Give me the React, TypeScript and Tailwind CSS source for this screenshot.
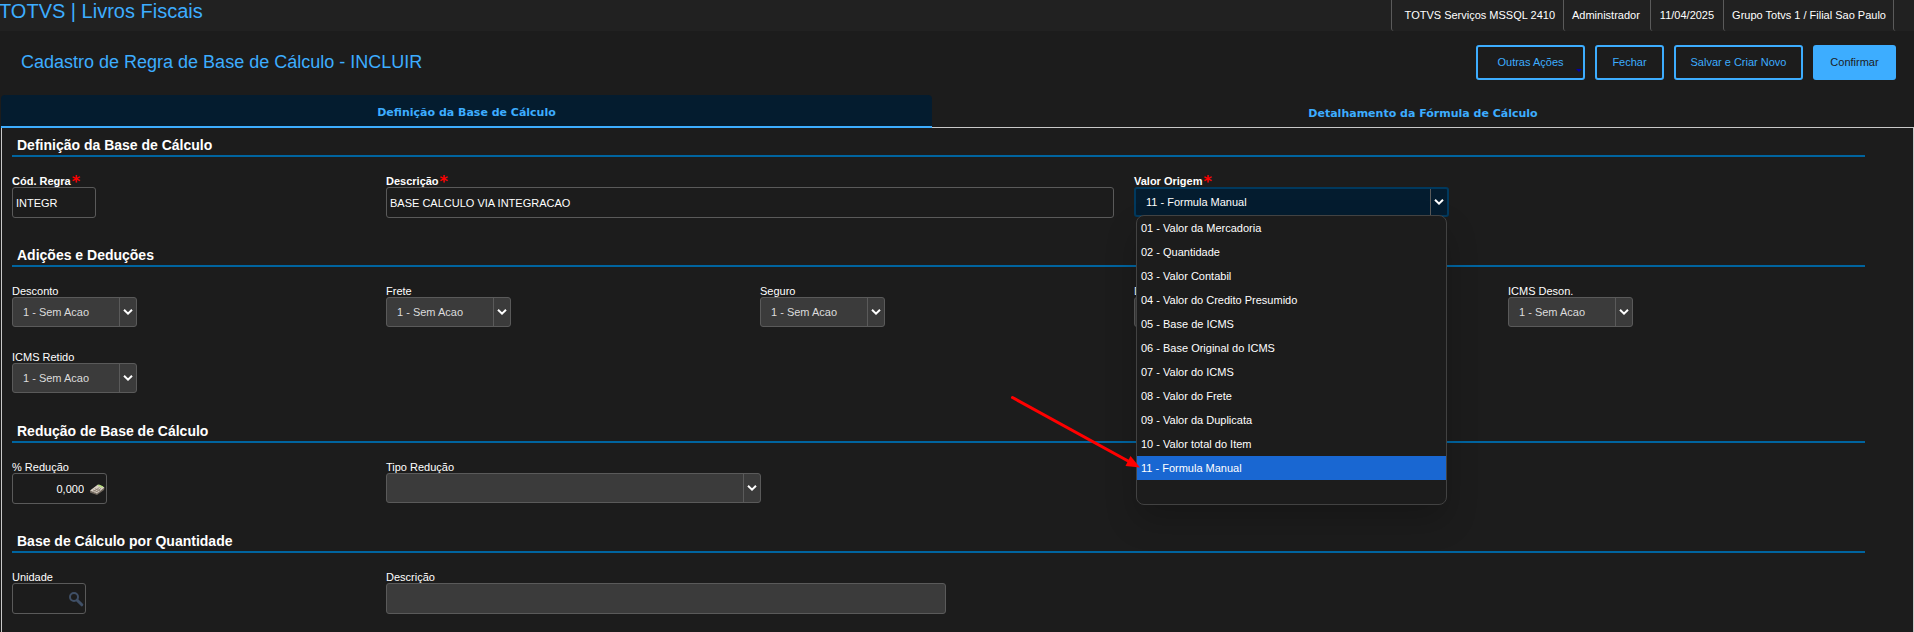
import React, { useState } from 'react';

const ORIGENS = [
  '01 - Valor da Mercadoria',
  '02 - Quantidade',
  '03 - Valor Contabil',
  '04 - Valor do Credito Presumido',
  '05 - Base de ICMS',
  '06 - Base Original do ICMS',
  '07 - Valor do ICMS',
  '08 - Valor do Frete',
  '09 - Valor da Duplicata',
  '10 - Valor total do Item',
  '11 - Formula Manual',
];

const ADICOES = ['Desconto', 'Frete', 'Seguro', 'Despesas', 'ICMS Deson.', 'ICMS Retido'];

const Section: React.FC<{ title: string; first?: boolean; children: React.ReactNode }> = ({ title, first, children }) => (
  <section className={first ? 'pt-[7px]' : 'pt-[22px]'}>
    <h2 className="mr-[17px] border-b-2 border-[#00649f] pl-[5px] text-[14px] leading-5 font-bold text-white">{title}</h2>
    <div className="grid grid-cols-5">{children}</div>
  </section>
);

const Field: React.FC<{ id: string; label: string; required?: boolean; className?: string; children: React.ReactNode }> = ({
  id,
  label,
  required,
  className = '',
  children,
}) => (
  <div className={`h-[66px] pt-[17px] ${className}`}>
    <label htmlFor={id} className={`flex h-[13px] text-[11px] leading-[15px] text-white ${required ? 'font-bold' : ''}`}>
      {label}
      {required && <span className="pl-px font-['DejaVu_Sans',Verdana,sans-serif] text-[16px] text-[#ff0000]">*</span>}
    </label>
    {children}
  </div>
);

const Chevron = () => (
  <span className="pointer-events-none absolute inset-y-0 right-0 flex w-[17px] items-center justify-center border-l border-[#5a5a5a]">
    <svg width="10" height="6" viewBox="0 0 10 6" fill="none" stroke="#fff" strokeWidth="2">
      <path d="M1 0.8 L5 4.6 L9 0.8" />
    </svg>
  </span>
);

const Select: React.FC<{ id: string; options: string[]; className: string }> = ({ id, options, className }) => (
  <div className={`relative h-[30px] overflow-hidden rounded-[3px] border border-[#5a5a5a] bg-[#3b3b3b] ${className}`}>
    <select id={id} className="block h-full w-full appearance-none bg-transparent pl-[10px] text-[11px] text-[#dcdcdc] outline-none">
      {options.map(o => (
        <option key={o}>{o}</option>
      ))}
    </select>
    <Chevron />
  </div>
);

const inputClass = 'block h-[31px] rounded-[3px] border border-[#5a5a5a] text-[11px] text-white outline-none';

const HeaderCell: React.FC<{ className: string; children?: React.ReactNode }> = ({ className, children }) => (
  <span className={`rounded-bl-[3px] border-l border-[#5a5a5a] ${className}`}>{children}</span>
);

const outlineButton = 'h-[35px] rounded-[3px] border-2 border-[#3dadff] text-[11px] text-[#3dadff]';

const ValorOrigem = () => {
  const [value, setValue] = useState(ORIGENS[10]);
  return (
    <div className="relative w-[315px]">
      <div className="relative h-[30px] rounded-[3px] border-2 border-[#00395e] bg-[#041c2f]">
        <select
          id="valor-origem"
          value={value}
          onChange={e => setValue(e.target.value)}
          className="block h-full w-full appearance-none bg-transparent pl-[10px] text-[11px] text-white outline-none"
        >
          {ORIGENS.map(o => (
            <option key={o}>{o}</option>
          ))}
        </select>
        <Chevron />
      </div>
      <ul className="absolute top-[28px] left-[2px] z-10 w-[311px] rounded-[8px] border border-[#424242] bg-[#1c1c1c] pb-6 text-[11px] leading-6 text-white shadow-[0_16px_32px_rgba(0,0,0,0.2)]">
        {ORIGENS.map(o => (
          <li key={o} onClick={() => setValue(o)} className={`pl-1 ${o === value ? 'bg-[#1967d2]' : ''}`}>
            {o}
          </li>
        ))}
      </ul>
      {/* Pointer to the manual formula option */}
      <svg className="pointer-events-none absolute top-[206px] left-[-126px] z-20" width="136" height="80" viewBox="0 0 136 80">
        <path d="M4.5 4.5 L121 68.5" stroke="#f00" strokeWidth="3" strokeLinecap="round" />
        <path d="M132 74.5 L117.5 73 L120 68 L122.5 63 Z" fill="#f00" />
      </svg>
    </div>
  );
};

const App: React.FC = () => {
  return (
    <div className="flex min-h-screen flex-col bg-[#1c1c1c] font-['Liberation_Sans',Arial,sans-serif]">
      <header className="flex h-[31px] justify-between bg-[#212121]">
        <h1 className="-ml-px text-[20px] leading-[22px] text-[#3dadff]">TOTVS | Livros Fiscais</h1>
        <div className="flex text-[11px] leading-[31px] text-white">
          <HeaderCell className="pr-2 pl-[13px]">TOTVS Serviços MSSQL 2410</HeaderCell>
          <HeaderCell className="pr-[10px] pl-2">Administrador</HeaderCell>
          <HeaderCell className="px-[9px]">11/04/2025</HeaderCell>
          <HeaderCell className="pr-[7px] pl-2">Grupo Totvs 1 / Filial Sao Paulo</HeaderCell>
          <HeaderCell className="w-[21px]" />
        </div>
      </header>

      <div className="flex h-16 items-start justify-between pt-[14px] pr-[18px] pl-[21px]">
        <h2 className="pt-[5px] text-[18px] leading-6 text-[#3dadff]">Cadastro de Regra de Base de Cálculo - INCLUIR</h2>
        <div className="flex gap-[10px]">
          <button className={`${outlineButton} relative w-[109px]`}>
            Outras Ações
            <span className="absolute right-px bottom-[6px] border-x-[3px] border-t-[3px] border-x-transparent border-t-[#0000a8]" />
          </button>
          <button className={`${outlineButton} w-[69px]`}>Fechar</button>
          <button className={`${outlineButton} w-[129px]`}>Salvar e Criar Novo</button>
          <button className="h-[35px] w-[83px] rounded-[3px] bg-[#3dadff] text-[11px] text-[#1c1c1c]">Confirmar</button>
        </div>
      </div>

      <nav className="flex h-[33px] pl-px font-['DejaVu_Sans',Verdana,sans-serif] text-[11px] font-bold text-[#3dadff]">
        <button className="w-[931px] rounded-t-[4px] border-b-2 border-[#3dadff] bg-[#041c2f] pt-[6px]">Definição da Base de Cálculo</button>
        <button className="flex-1 border-b border-[#c8c8c8] pt-[6px]">Detalhamento da Fórmula de Cálculo</button>
      </nav>

      <main className="ml-px flex-1 border-x border-[#c8c8c8] pr-[31px] pl-[10px]">
        <Section title="Definição da Base de Cálculo" first>
          <Field id="cod-regra" label="Cód. Regra" required>
            <input id="cod-regra" defaultValue="INTEGR" className={`${inputClass} w-[84px] bg-transparent px-[3px]`} />
          </Field>
          <Field id="descricao" label="Descrição" required className="col-span-2">
            <input id="descricao" defaultValue="BASE CALCULO VIA INTEGRACAO" className={`${inputClass} w-[728px] bg-transparent px-[3px]`} />
          </Field>
          <Field id="valor-origem" label="Valor Origem" required>
            <ValorOrigem />
          </Field>
        </Section>

        <Section title="Adições e Deduções">
          {ADICOES.map(label => (
            <Field key={label} id={label} label={label}>
              <Select id={label} options={['1 - Sem Acao']} className="w-[125px]" />
            </Field>
          ))}
        </Section>

        <Section title="Redução de Base de Cálculo">
          <Field id="reducao" label="% Redução">
            <div className="relative w-[95px]">
              <input id="reducao" defaultValue="0,000" className={`${inputClass} w-full bg-transparent pr-[22px] text-right`} />
              {/* Calculator */}
              <svg className="absolute top-[10px] right-[2px]" width="16" height="13" viewBox="0 0 16 13">
                <path d="M1 8 L8.5 2 L15.5 5 L15 7 L8 12 L1 9.5 Z" fill="#6f665c" />
                <path d="M1 7.5 L9 1.5 L15.5 4.5 L8 10.5 Z" fill="#d8cfc4" />
                <path d="M8.5 2.5 L10 1.5 L14.5 3.6 L13 4.8 Z" fill="#b5dd7c" />
                <path d="M4 7 L9.5 9.2 M5.8 5.6 L11.2 7.8 M4.5 8.5 L10.5 4.5 M6.5 9.3 L12 5.4" stroke="#8d8175" strokeWidth="0.9" />
              </svg>
            </div>
          </Field>
          <Field id="tipo-reducao" label="Tipo Redução">
            <Select id="tipo-reducao" options={['']} className="w-[375px]" />
          </Field>
        </Section>

        <Section title="Base de Cálculo por Quantidade">
          <Field id="unidade" label="Unidade">
            <div className="relative w-[74px]">
              <input id="unidade" className={`${inputClass} w-full bg-transparent pr-[20px] pl-[3px]`} />
              <svg className="absolute top-2 right-[2px]" width="16" height="16" viewBox="0 0 16 16" fill="none" stroke="#3f4f66">
                <circle cx="6" cy="6" r="4" strokeWidth="2" />
                <path d="M9.2 9.2 L13.8 13.8" strokeWidth="3" strokeLinecap="round" />
              </svg>
            </div>
          </Field>
          <Field id="desc-unidade" label="Descrição" className="col-span-2">
            <input id="desc-unidade" readOnly className={`${inputClass} w-[560px] bg-[#3b3b3b] px-[3px]`} />
          </Field>
        </Section>
      </main>
    </div>
  );
};

export default App;
